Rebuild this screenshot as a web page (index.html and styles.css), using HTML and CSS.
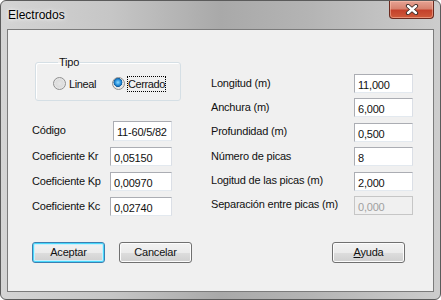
FILE: index.html
```html
<!DOCTYPE html>
<html lang="es">
<head>
    <meta charset="UTF-8">
    <meta name="viewport" content="width=device-width, initial-scale=1.0">
    <title>Electrodos</title>
    <link rel="stylesheet" href="styles.css">
</head>
<body>
    <div class="window">
        <div class="titlebar">
            <span class="title">Electrodos</span>
            <div class="close-btn">
                <svg width="14" height="11" viewBox="0 0 14 11">
                    <path d="M3 2 L11 9 M11 2 L3 9" stroke="#3a2a26" stroke-width="4.2" stroke-linecap="round"/>
                    <path d="M3 2 L11 9 M11 2 L3 9" stroke="#fff" stroke-width="2.4" stroke-linecap="round"/>
                </svg>
            </div>
        </div>

        <div class="client">
            <div class="main">
                <div class="col-left">
                    <fieldset class="group">
                        <legend>Tipo</legend>
                        <div class="radios">
                            <div class="radio-item">
                                <span class="radio"></span>
                                <span class="radio-label">Lineal</span>
                            </div>
                            <div class="radio-item">
                                <span class="radio checked"></span>
                                <span class="radio-label focused">Cerrado</span>
                            </div>
                        </div>
                    </fieldset>

                    <div class="fields left-fields">
                        <label>Código</label>
                        <div class="edit code">11-60/5/82</div>
                        <label>Coeficiente Kr</label>
                        <div class="edit">0,05150</div>
                        <label>Coeficiente Kp</label>
                        <div class="edit">0,00970</div>
                        <label>Coeficiente Kc</label>
                        <div class="edit">0,02740</div>
                    </div>
                </div>

                <div class="fields right-fields">
                    <label>Longitud (m)</label>
                    <div class="edit">11,000</div>
                    <label>Anchura (m)</label>
                    <div class="edit">6,000</div>
                    <label>Profundidad (m)</label>
                    <div class="edit">0,500</div>
                    <label>Número de picas</label>
                    <div class="edit">8</div>
                    <label>Logitud de las picas (m)</label>
                    <div class="edit">2,000</div>
                    <label>Separación entre picas (m)</label>
                    <div class="edit disabled">0,000</div>
                </div>
            </div>

            <div class="buttons">
                <div class="btn btn-default">Aceptar</div>
                <div class="btn">Cancelar</div>
                <div class="btn btn-right"><u>A</u>yuda</div>
            </div>
        </div>
    </div>
</body>
</html>
```

FILE: styles.css
```css
body {
    margin: 0;
    padding: 0;
    background-color: #ffffff;
    font-family: "Liberation Sans", Arial, sans-serif;
}

.window {
    width: 441px;
    height: 300px;
    box-sizing: border-box;
    border: 1px solid #5b5b5b;
    border-radius: 6px;
    background: linear-gradient(to right, #d4d4d4 0%, #c6c6c6 25%, #a9a9a9 50%, #b4b4b4 70%, #cdcdcd 100%);
    display: flex;
    flex-direction: column;
}

.titlebar {
    height: 28px;
    display: flex;
    align-items: flex-start;
}

.title {
    padding: 7px 0 0 7px;
    font-size: 12px;
    line-height: 14px;
    color: #000;
    text-shadow: 0 0 6px rgba(255, 255, 255, 0.9), 0 0 3px rgba(255, 255, 255, 0.9);
}

.close-btn {
    margin-left: auto;
    margin-right: 6px;
    width: 45px;
    height: 18px;
    box-sizing: border-box;
    border: 1px solid #6b2a1f;
    border-top: none;
    border-radius: 0 0 4px 4px;
    background: linear-gradient(#e6a394 0%, #d7826f 45%, #c4412b 55%, #cf5a3a 100%);
    box-shadow: inset 0 0 0 1px rgba(255, 200, 180, 0.5);
    display: flex;
    align-items: center;
    justify-content: center;
}

.client {
    margin: 0 6px 7px 6px;
    flex: 1;
    border: 1px solid #7b7b7b;
    background-color: #f0f0f0;
    font-size: 11px;
    letter-spacing: -0.2px;
    color: #111;
}

.main {
    display: flex;
    align-items: flex-start;
    padding: 26px 0 0 24px;
    gap: 23px;
}

.col-left {
    width: 156px;
}

.group {
    margin: 0 0 0 3px;
    padding: 7px 0 9px 17px;
    width: 146px;
    box-sizing: border-box;
    border: 1px solid #d5dfe5;
    border-radius: 3px;
    box-shadow: inset 1px 1px 0 #fff;
}

.group legend {
    margin-left: 5px;
    padding: 0 1px;
    line-height: 13px;
}

.radios {
    display: flex;
    align-items: center;
    gap: 15px;
    height: 15px;
}

.radio-item {
    display: flex;
    align-items: center;
    gap: 2px;
}

.radio {
    width: 13px;
    height: 13px;
    box-sizing: border-box;
    border-radius: 50%;
    border: 1px solid #8f8f8f;
    background: radial-gradient(circle at 50% 50%, #e6e6e6 0%, #dcdcdc 45%, #f6f6f6 100%);
}

.radio.checked {
    background: radial-gradient(circle at 45% 40%, #8fdcff 0%, #2a93df 30%, #0d5a9c 48%, #e2e2e2 52%, #f6f6f6 100%);
}

.radio-label {
    padding: 1px 0;
    line-height: 12px;
    letter-spacing: -0.4px;
    border: 1px dotted transparent;
}

.radio-label.focused {
    border-color: #000;
}

.fields {
    display: grid;
    align-items: center;
}

.left-fields {
    margin-top: 20px;
    grid-template-columns: 78px 62px;
    row-gap: 6px;
}

.right-fields {
    margin-top: 18px;
    grid-template-columns: 143px 59px;
    row-gap: 5.4px;
}

.fields label {
    padding-bottom: 2px;
    white-space: nowrap;
}

.edit {
    height: 19px;
    box-sizing: border-box;
    border: 1px solid #abadb3;
    border-right-color: #dbdfe6;
    border-bottom-color: #e3e9ef;
    background-color: #fff;
    padding: 4px 0 0 3px;
    line-height: 13px;
    overflow: hidden;
    white-space: nowrap;
}

.edit.code {
    margin-left: 3px;
    height: 20px;
}

.edit.disabled {
    background-color: #f0f0f0;
    border-color: #c6c6c6;
    color: #a0a0a0;
}

.buttons {
    display: flex;
    gap: 14px;
    margin-top: 26px;
    padding: 0 28px 0 24px;
}

.btn {
    width: 73px;
    height: 21px;
    box-sizing: border-box;
    border: 1px solid #707070;
    border-radius: 3px;
    background: linear-gradient(#f2f2f2 0%, #ebebeb 50%, #dddddd 51%, #cfcfcf 100%);
    box-shadow: inset 0 0 0 1px #fcfcfc;
    text-align: center;
    line-height: 19px;
}

.btn-default {
    border-color: #3c7fb1;
    box-shadow: inset 0 0 0 1px #48d8fb, inset 0 0 0 2px #c9eefc;
}

.btn-right {
    margin-left: auto;
}
```
